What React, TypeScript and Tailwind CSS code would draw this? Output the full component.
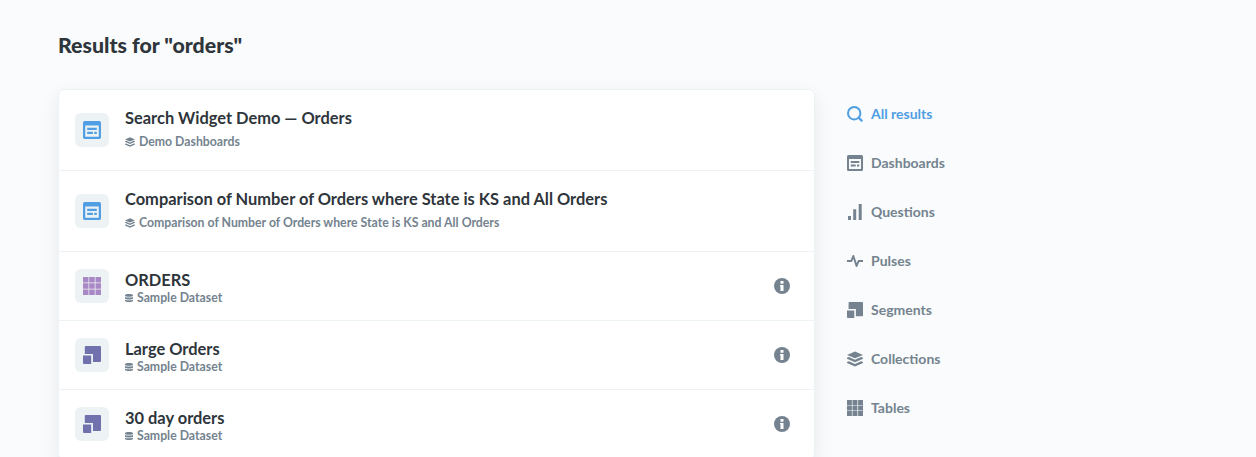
import React from "react";

type IconProps = { className?: string };
type IconType = (props: IconProps) => React.ReactElement;

const DashboardIcon: IconType = ({ className }) => (
  <svg viewBox="0 0 32 32" fill="currentColor" className={className}>
    <path
      fillRule="evenodd"
      d="M3 0h26a3 3 0 0 1 3 3v26a3 3 0 0 1-3 3H3a3 3 0 0 1-3-3V3a3 3 0 0 1 3-3zM4 8v20h24V8H4zM7.500 12h17v4h-17v-4zM7.500 19h10v4h-10v-4zM20 19h4.500v4H20v-4z"
    />
  </svg>
);

const SearchIcon: IconType = ({ className }) => (
  <svg viewBox="0 0 16 16" fill="none" stroke="currentColor" className={className}>
    <circle cx="7.200" cy="7.200" r="6.200" strokeWidth="2" />
    <path d="M11.400 11.400L15.300 15.300" strokeWidth="2.200" />
  </svg>
);

const BarIcon: IconType = ({ className }) => (
  <svg viewBox="0 0 16 16" fill="currentColor" className={className}>
    <path d="M1 12h3v4H1zM6.200 5.300h3V16h-3zM11.700 0h3v16h-3z" />
  </svg>
);

const PulseIcon: IconType = ({ className }) => (
  <svg viewBox="0 0 16 16" fill="none" stroke="currentColor" strokeWidth="2" strokeLinejoin="round" className={className}>
    <path d="M0 8H4.300L6.300 3L9.600 13L11.600 8H16" />
  </svg>
);

const SegmentIcon: IconType = ({ className }) => (
  <svg viewBox="0 0 18 18" fill="currentColor" className={className}>
    <path d="M2.800 0H17a1 1 0 0 1 1 1v14a1 1 0 0 1-1 1H10V8H1.800V1a1 1 0 0 1 1-1zM0 9.500h8.200V18H1a1 1 0 0 1-1-1z" />
  </svg>
);

const CollectionIcon: IconType = ({ className }) => (
  <svg viewBox="0 0 16 16" fill="currentColor" className={className}>
    <path d="M8 .4L16 3.900L8 7.300L0 3.900zM0 6.700L1.900 5.900L8 8.800L14.100 5.900L16 6.700V7.700L8 11.200L0 7.700zM0 10.900L2 10.200L8 13L14 10.200L16 10.900V12L8 15.500L0 12z" />
  </svg>
);

const TableIcon: IconType = ({ className }) => (
  <svg viewBox="0 0 18 18" fill="currentColor" className={className}>
    <path d="M0 0h5.500v5.500H0zM6.200 0h5.500v5.500H6.200zM12.500 0H18v5.500h-5.500zM0 6.200h5.500v5.500H0zM6.200 6.200h5.500v5.500H6.200zM12.500 6.200H18v5.500h-5.500zM0 12.500h5.500V18H0zM6.200 12.500h5.500V18H6.200zM12.500 12.500H18V18h-5.500z" />
  </svg>
);

const DatabaseIcon: IconType = ({ className }) => (
  <svg viewBox="0 0 8 8" fill="currentColor" className={className}>
    <path d="M0 1.200C0-.4 8-.4 8 1.200V1.900C8 2.900 0 2.900 0 1.900zM0 3C1.800 3.700 6.200 3.700 8 3V4.700C7.200 5.600.8 5.600 0 4.700zM0 5.700C1.800 6.400 6.200 6.400 8 5.700V7C7.200 8.300.8 8.300 0 7z" />
  </svg>
);

const InfoIcon: IconType = ({ className }) => (
  <svg viewBox="0 0 16 16" className={className}>
    <circle cx="8" cy="8" r="8" fill="#74838f" />
    <path d="M6.500 3h3v2.800h-3zM6 7h3.500v6h-3V8.200H6z" fill="#fff" />
  </svg>
);

type Result = {
  title: string;
  parent: string;
  icon: IconType;
  color: string;
  table?: boolean;
};

const results: Result[] = [
  { title: "Search Widget Demo — Orders", parent: "Demo Dashboards", icon: DashboardIcon, color: "text-[#509ee3]" },
  {
    title: "Comparison of Number of Orders where State is KS and All Orders",
    parent: "Comparison of Number of Orders where State is KS and All Orders",
    icon: DashboardIcon,
    color: "text-[#509ee3]",
  },
  { title: "ORDERS", parent: "Sample Dataset", icon: TableIcon, color: "text-[#a989c5]", table: true },
  { title: "Large Orders", parent: "Sample Dataset", icon: SegmentIcon, color: "text-[#7172ad]", table: true },
  { title: "30 day orders", parent: "Sample Dataset", icon: SegmentIcon, color: "text-[#7172ad]", table: true },
];

const filters: { label: string; icon: IconType }[] = [
  { label: "All results", icon: SearchIcon },
  { label: "Dashboards", icon: DashboardIcon },
  { label: "Questions", icon: BarIcon },
  { label: "Pulses", icon: PulseIcon },
  { label: "Segments", icon: SegmentIcon },
  { label: "Collections", icon: CollectionIcon },
  { label: "Tables", icon: TableIcon },
];

function ResultRow({ item }: { item: Result }) {
  const Icon = item.icon;
  return (
    <li
      className={`flex items-center border-b border-[#edf2f5] pl-4 pr-6 ${item.table ? "h-[69px]" : "h-[81px]"}`}
    >
      <div className="flex size-[34px] shrink-0 items-center justify-center rounded-md bg-[#edf2f5]">
        <Icon className={`size-[18px] ${item.color}`} />
      </div>
      <div className={`ml-4 flex-1 ${item.table ? "pt-[3px]" : "pb-0.5"}`}>
        <h2 className="text-[16.43px] leading-5 font-bold text-[#2e353b]">{item.title}</h2>
        <div
          className={`flex items-center gap-1 text-[12.28px] leading-4 font-bold text-[#74838f] ${item.table ? "" : "mt-1.5"}`}
        >
          {item.table ? <DatabaseIcon className="size-2" /> : <CollectionIcon className="size-2.5" />}
          <span>{item.parent}</span>
        </div>
      </div>
      {item.table && <InfoIcon className="size-4" />}
    </li>
  );
}

export default function App() {
  return (
    <main className="h-[457px] overflow-hidden bg-[#f9fbfc] px-[58px] pt-[31px] font-['Lato',sans-serif]">
      <h1 className="h-[58px] text-[21.3px] leading-7 font-black text-[#2e353b]">Results for "orders"</h1>
      <div className="flex items-start gap-8">
        <ul className="w-[757px] rounded-md border border-[#edf2f5] bg-white shadow-[0_7px_20px_rgba(0,0,0,0.08)]">
          {results.map((item) => (
            <ResultRow key={item.title} item={item} />
          ))}
        </ul>
        <nav>
          {filters.map(({ label, icon: Icon }, index) => (
            <a
              key={label}
              className={`flex h-[49px] items-center gap-2 text-[14px] font-bold ${index === 0 ? "text-[#509ee3]" : "text-[#74838f]"}`}
            >
              <Icon className="size-4" />
              {label}
            </a>
          ))}
        </nav>
      </div>
    </main>
  );
}
